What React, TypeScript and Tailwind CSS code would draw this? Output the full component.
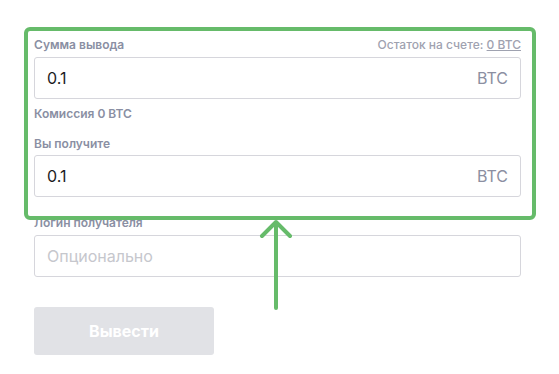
import React from 'react';

const font = { fontFamily: 'Inter, Roboto, "Noto Sans", sans-serif' };

function AmountField({ value }: { value: string }) {
  return (
    <div className="flex h-[42px] items-center justify-between rounded-[3px] border border-[#d6d6dc] bg-white px-3">
      <span className="text-[16px] text-[#1c1c1e]">{value}</span>
      <span className="text-[16px] text-[#8b8fa1]">BTC</span>
    </div>
  );
}

export default function App() {
  return (
    <div className="relative h-[374px] w-[559px] bg-white" style={font}>
      <div className="ml-[34px] w-[487px] pt-[37px]">
        <div className="mb-1 flex h-4 items-center justify-between text-[12px] leading-4">
          <span className="font-semibold text-[#8a8fa3]">Сумма вывода</span>
          <span className="font-medium text-[#9fa2b0]">
            Остаток на счете: <span className="underline">0 BTC</span>
          </span>
        </div>
        <AmountField value="0.1" />

        <div className="mt-[7px] h-4 text-[12px] font-semibold leading-4 text-[#8a8fa3]">
          Комиссия 0 BTC
        </div>

        <div className="mb-[3px] mt-[14px] h-4 text-[12px] font-semibold leading-4 text-[#8a8fa3]">
          Вы получите
        </div>
        <AmountField value="0.1" />

        <div className="mb-[4px] mt-[18px] h-4 text-[12px] font-semibold leading-4 text-[#8a8fa3]">
          Логин получателя
        </div>
        <div className="flex h-[42px] items-center rounded-[3px] border border-[#d6d6dc] bg-white px-3">
          <span className="text-[16px] text-[#c6c7cd]">Опционально</span>
        </div>

        <button className="mt-[30px] h-12 w-[180px] rounded-[3px] bg-[#e1e2e6] text-[16px] font-bold text-white">
          Вывести
        </button>
      </div>

      {/* annotation overlay */}
      <div className="pointer-events-none absolute left-[24px] top-[27px] h-[193px] w-[512px] rounded-[6px] border-4 border-[#66bb6a]" />
      <svg className="pointer-events-none absolute left-[256px] top-[216px]" width="40" height="96" viewBox="0 0 40 96">
        <path d="M20 6 V92 M6 20 L20 6 L34 20" fill="none" stroke="#66bb6a" strokeWidth="4" strokeLinecap="round" strokeLinejoin="round" />
      </svg>
    </div>
  );
}
